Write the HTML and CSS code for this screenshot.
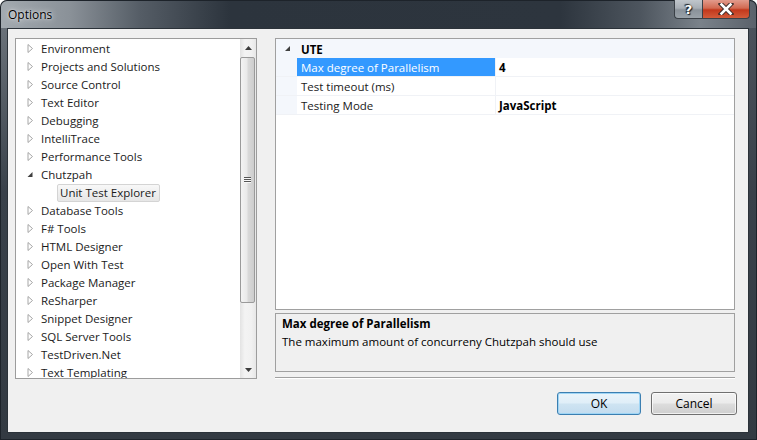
FILE: index.html
```html
<!DOCTYPE html>
<html>
<head>
<meta charset="utf-8">
<title>Options</title>
<link rel="stylesheet" href="styles.css">
</head>
<body>
<div class="window">
  <div class="titlebar">
    <span class="title">Options</span>
    <div class="caption-btns">
      <div class="cbtn help">?</div>
      <div class="cbtn close">
        <svg width="16" height="12" viewBox="0 0 16 12"><path d="M3 1 L13 11 M13 1 L3 11" stroke="#3a2a28" stroke-width="4.5" stroke-linecap="square"/><path d="M3.5 1.5 L12.5 10.5 M12.5 1.5 L3.5 10.5" stroke="#ffffff" stroke-width="2.6" stroke-linecap="square"/></svg>
      </div>
    </div>
  </div>
  <div class="client">
    <div class="main">
      <div class="tree">
        <ul class="tree-list">
          <li class="node"><span class="exp"><svg width="7" height="9" viewBox="0 0 7 9"><path d="M1 0.5 L5.5 4.5 L1 8.5 Z" fill="#fff" stroke="#a6a6a6"/></svg></span><span class="label">Environment</span></li>
          <li class="node"><span class="exp"><svg width="7" height="9" viewBox="0 0 7 9"><path d="M1 0.5 L5.5 4.5 L1 8.5 Z" fill="#fff" stroke="#a6a6a6"/></svg></span><span class="label">Projects and Solutions</span></li>
          <li class="node"><span class="exp"><svg width="7" height="9" viewBox="0 0 7 9"><path d="M1 0.5 L5.5 4.5 L1 8.5 Z" fill="#fff" stroke="#a6a6a6"/></svg></span><span class="label">Source Control</span></li>
          <li class="node"><span class="exp"><svg width="7" height="9" viewBox="0 0 7 9"><path d="M1 0.5 L5.5 4.5 L1 8.5 Z" fill="#fff" stroke="#a6a6a6"/></svg></span><span class="label">Text Editor</span></li>
          <li class="node"><span class="exp"><svg width="7" height="9" viewBox="0 0 7 9"><path d="M1 0.5 L5.5 4.5 L1 8.5 Z" fill="#fff" stroke="#a6a6a6"/></svg></span><span class="label">Debugging</span></li>
          <li class="node"><span class="exp"><svg width="7" height="9" viewBox="0 0 7 9"><path d="M1 0.5 L5.5 4.5 L1 8.5 Z" fill="#fff" stroke="#a6a6a6"/></svg></span><span class="label">IntelliTrace</span></li>
          <li class="node"><span class="exp"><svg width="7" height="9" viewBox="0 0 7 9"><path d="M1 0.5 L5.5 4.5 L1 8.5 Z" fill="#fff" stroke="#a6a6a6"/></svg></span><span class="label">Performance Tools</span></li>
          <li class="node"><span class="exp"><svg width="7" height="9" viewBox="0 0 7 9"><path d="M5.5 2 L5.5 7 L0.5 7 Z" fill="#404040"/></svg></span><span class="label">Chutzpah</span></li>
          <li class="node child"><span class="label selected">Unit Test Explorer</span></li>
          <li class="node"><span class="exp"><svg width="7" height="9" viewBox="0 0 7 9"><path d="M1 0.5 L5.5 4.5 L1 8.5 Z" fill="#fff" stroke="#a6a6a6"/></svg></span><span class="label">Database Tools</span></li>
          <li class="node"><span class="exp"><svg width="7" height="9" viewBox="0 0 7 9"><path d="M1 0.5 L5.5 4.5 L1 8.5 Z" fill="#fff" stroke="#a6a6a6"/></svg></span><span class="label">F# Tools</span></li>
          <li class="node"><span class="exp"><svg width="7" height="9" viewBox="0 0 7 9"><path d="M1 0.5 L5.5 4.5 L1 8.5 Z" fill="#fff" stroke="#a6a6a6"/></svg></span><span class="label">HTML Designer</span></li>
          <li class="node"><span class="exp"><svg width="7" height="9" viewBox="0 0 7 9"><path d="M1 0.5 L5.5 4.5 L1 8.5 Z" fill="#fff" stroke="#a6a6a6"/></svg></span><span class="label">Open With Test</span></li>
          <li class="node"><span class="exp"><svg width="7" height="9" viewBox="0 0 7 9"><path d="M1 0.5 L5.5 4.5 L1 8.5 Z" fill="#fff" stroke="#a6a6a6"/></svg></span><span class="label">Package Manager</span></li>
          <li class="node"><span class="exp"><svg width="7" height="9" viewBox="0 0 7 9"><path d="M1 0.5 L5.5 4.5 L1 8.5 Z" fill="#fff" stroke="#a6a6a6"/></svg></span><span class="label">ReSharper</span></li>
          <li class="node"><span class="exp"><svg width="7" height="9" viewBox="0 0 7 9"><path d="M1 0.5 L5.5 4.5 L1 8.5 Z" fill="#fff" stroke="#a6a6a6"/></svg></span><span class="label">Snippet Designer</span></li>
          <li class="node"><span class="exp"><svg width="7" height="9" viewBox="0 0 7 9"><path d="M1 0.5 L5.5 4.5 L1 8.5 Z" fill="#fff" stroke="#a6a6a6"/></svg></span><span class="label">SQL Server Tools</span></li>
          <li class="node"><span class="exp"><svg width="7" height="9" viewBox="0 0 7 9"><path d="M1 0.5 L5.5 4.5 L1 8.5 Z" fill="#fff" stroke="#a6a6a6"/></svg></span><span class="label">TestDriven.Net</span></li>
          <li class="node"><span class="exp"><svg width="7" height="9" viewBox="0 0 7 9"><path d="M1 0.5 L5.5 4.5 L1 8.5 Z" fill="#fff" stroke="#a6a6a6"/></svg></span><span class="label">Text Templating</span></li>
        </ul>
        <div class="vscroll">
          <div class="sbtn"><svg width="7" height="4" viewBox="0 0 7 4"><path d="M3.5 0 L7 4 L0 4 Z" fill="#3c3c3c"/></svg></div>
          <div class="track">
            <div class="thumb">
              <div class="grip"><i></i><i></i><i></i></div>
            </div>
          </div>
          <div class="sbtn"><svg width="7" height="4" viewBox="0 0 7 4"><path d="M0 0 L7 0 L3.5 4 Z" fill="#3c3c3c"/></svg></div>
        </div>
      </div>
      <div class="right">
        <div class="grid">
          <div class="cat"><span class="cat-exp"><svg width="7" height="7" viewBox="0 0 7 7"><path d="M6 1 L6 6 L1 6 Z" fill="#404040"/></svg></span><span class="cat-name">UTE</span></div>
          <div class="prow sel"><div class="margin"></div><div class="pname">Max degree of Parallelism</div><div class="pval">4</div></div>
          <div class="prow"><div class="margin"></div><div class="pname">Test timeout (ms)</div><div class="pval"></div></div>
          <div class="prow"><div class="margin"></div><div class="pname">Testing Mode</div><div class="pval">JavaScript</div></div>
        </div>
        <div class="desc">
          <div class="desc-title">Max degree of Parallelism</div>
          <div class="desc-text">The maximum amount of concurreny Chutzpah should use</div>
        </div>
        <div class="sep"></div>
      </div>
    </div>
    <div class="buttons">
      <div class="btn default">OK</div>
      <div class="btn">Cancel</div>
    </div>
  </div>
</div>
</body>
</html>
```
FILE: styles.css
```css
* { box-sizing: border-box; }
html, body { margin: 0; padding: 0; }
body {
  width: 757px;
  height: 440px;
  overflow: hidden;
  background: #ffffff;
  font-family: "Open Sans", "Noto Sans", sans-serif;
  font-size: 11.5px;
  color: #000;
}
.window {
  width: 757px;
  height: 440px;
  display: flex;
  flex-direction: column;
  padding: 0 8px 7px 7px;
  border-radius: 7px 7px 0 0;
  background:
    linear-gradient(to right, #a3aab0 0px, #8a9198 70px, #555d66 140px, #2c343d 230px, #2d353e 560px, #4d555e 640px, #7a828a 700px, #5a616a 757px);
  box-shadow: inset 0 0 0 1px #1d232a;
  position: relative;
}
.window::before {
  content: "";
  position: absolute;
  left: 1px; right: 1px; top: 28px; bottom: 1px;
  background: linear-gradient(to bottom, rgba(60,68,77,0.55), #39414a 40%, #333a42);
  z-index: 0;
}
.titlebar {
  height: 28px;
  display: flex;
  align-items: flex-start;
  justify-content: space-between;
  position: relative;
  z-index: 1;
}
.title {
  margin-top: 7px;
  margin-left: 1px;
  font-size: 12px;
  line-height: 16px;
  color: #000;
  text-shadow: 0 0 6px rgba(255,255,255,0.9), 0 0 2px rgba(255,255,255,0.7);
}
.caption-btns {
  display: flex;
  margin-right: -1px;
}
.cbtn {
  height: 19px;
  display: flex;
  align-items: center;
  justify-content: center;
  border: 1px solid #3a4047;
  border-top: none;
}
.help {
  width: 28px;
  border-radius: 0 0 0 4px;
  border-right: none;
  background: linear-gradient(to bottom, #c0c6cc, #a7aeb5 45%, #8a929a 55%, #9aa2a9);
  color: #fff;
  font-family: "DejaVu Sans", sans-serif;
  font-weight: bold;
  font-size: 13px;
  line-height: 19px;
  text-shadow: 0 0 1px #1b1f24, 1px 1px 1px #1b1f24, -1px -1px 1px #1b1f24;
}
.close {
  width: 48px;
  border-radius: 0 0 4px 0;
  background: linear-gradient(to bottom, #e29b8c, #d26a52 45%, #c2381c 55%, #d25b3a);
}
.client {
  flex: 1;
  background: #f0f0f0;
  border: 1px solid #2b3239;
  display: flex;
  flex-direction: column;
  position: relative;
  z-index: 1;
}
.main {
  display: flex;
  padding: 9px 12px 0 7px;
}
.tree {
  width: 242px;
  height: 341px;
  border: 1px solid #9c9c9c;
  background: #fff;
  display: flex;
  overflow: hidden;
}
.tree-list {
  list-style: none;
  margin: 0;
  padding: 0;
  width: 224px;
  overflow: hidden;
}
.node {
  height: 18px;
  display: flex;
  align-items: center;
  white-space: nowrap;
}
.exp {
  width: 14px;
  margin-left: 11px;
  height: 18px;
  display: flex;
  align-items: center;
}
.exp svg { display: block; }
.label {
  line-height: 18px;
  padding-top: 1px;
  color: #1a1a1a;
}
.child { padding-left: 41px; }
.label.selected {
  display: block;
  height: 18px;
  line-height: 16px;
  padding: 0 3px 0 2px;
  margin-top: 1px;
  border: 1px solid #d4d4d4;
  border-radius: 2px;
  background: linear-gradient(to bottom, #f8f8f8, #e6e6e6);
}
.vscroll {
  width: 16px;
  display: flex;
  flex-direction: column;
  background: linear-gradient(to right, #e3e3e3, #f3f3f3 30%, #f1f1f1 70%, #e7e7e7);
}
.sbtn {
  height: 17px;
  display: flex;
  align-items: center;
  justify-content: center;
}
.sbtn svg { display: block; }
.track {
  flex: 1;
  padding-top: 1px;
}
.thumb {
  height: 246px;
  margin: 0 1px 0 0;
  border: 1px solid #9a9a9a;
  border-radius: 2px;
  background: linear-gradient(to right, #f3f3f3, #e9e9e9 45%, #d9d9d9 55%, #cdcdcd);
  display: flex;
  align-items: center;
  justify-content: center;
}
.grip {
  display: flex;
  flex-direction: column;
  gap: 0;
}
.grip i {
  display: block;
  width: 7px;
  height: 1px;
  background: #555;
  border-bottom: 1px solid #f8f8f8;
  box-sizing: content-box;
}
.right {
  width: 460px;
  margin-left: 18px;
  display: flex;
  flex-direction: column;
}
.grid {
  height: 272px;
  border: 1px solid #a0a0a0;
  background: #fff;
}
.cat {
  height: 19px;
  background: #f4f7fc;
  display: flex;
  align-items: center;
}
.cat-exp {
  width: 21px;
  display: flex;
  justify-content: center;
  align-items: center;
  padding-left: 1px;
}
.cat-exp svg { display: block; }
.cat-name {
  font-weight: bold;
  padding-left: 4px;
  padding-top: 1px;
}
.prow {
  display: flex;
  height: 19px;
  border-bottom: 1px solid #f0f2f6;
}
.margin {
  width: 21px;
  background: #f4f7fc;
}
.pname {
  width: 199px;
  padding-left: 4px;
  line-height: 19px;
  border-right: 1px solid #f0f2f6;
  color: #1a1a1a;
}
.pval {
  flex: 1;
  padding-left: 3px;
  line-height: 19px;
  font-weight: bold;
}
.prow.sel .pname {
  background: #3399ff;
  color: #fff;
}
.desc {
  margin-top: 3px;
  height: 59px;
  border: 1px solid #a0a0a0;
  background: #f0f0f0;
  padding: 1px 6px 0;
}
.desc-title {
  font-weight: bold;
  line-height: 18px;
}
.desc-text { line-height: 18px; }
.sep {
  margin-top: 5px;
  height: 2px;
  border-top: 1px solid #a0a0a0;
  border-bottom: 1px solid #ffffff;
}
.buttons {
  display: flex;
  justify-content: flex-end;
  gap: 10px;
  padding: 13px 11px 0 0;
}
.btn {
  height: 23px;
  width: 86px;
  font-size: 12px;
  border: 1px solid #707070;
  border-radius: 3px;
  background: linear-gradient(to bottom, #f2f2f2, #ebebeb 49%, #dddddd 51%, #cfcfcf);
  box-shadow: inset 0 0 0 1px rgba(255,255,255,0.7);
  display: flex;
  align-items: center;
  justify-content: center;
  color: #000;
}
.btn.default {
  width: 84px;
  border-color: #3c7fb1;
  background: linear-gradient(to bottom, #eaf4fa, #dfeef8 49%, #cfe4f2 51%, #c3dcef);
  box-shadow: inset 0 0 0 1px #9fd5f5;
}
```
